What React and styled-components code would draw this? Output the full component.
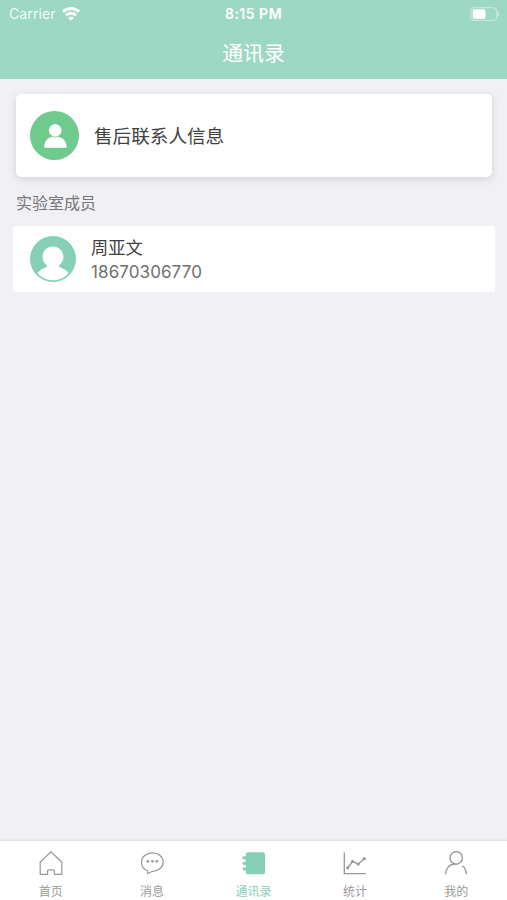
import styled, { createGlobalStyle } from 'styled-components';

const members = [
  { name: '周亚文', phone: '18670306770' },
];

const tabs = [
  { label: '首页', Icon: HomeIcon },
  { label: '消息', Icon: MessageIcon },
  { label: '通讯录', Icon: ContactsIcon, active: true },
  { label: '统计', Icon: ChartIcon },
  { label: '我的', Icon: ProfileIcon },
];

export default function App() {
  return (
    <>
      <GlobalStyle />
      <Screen>
        <Header>
          <StatusBar>
            <Carrier>
              Carrier
              <WifiIcon />
            </Carrier>
            <Clock>8:15 PM</Clock>
            <BatterySlot>
              <BatteryIcon />
            </BatterySlot>
          </StatusBar>
          <Title>通讯录</Title>
        </Header>
        <Content>
          <SupportCard>
            <SupportIcon />
            <SupportText>售后联系人信息</SupportText>
          </SupportCard>
          <SectionLabel>实验室成员</SectionLabel>
          {members.map(member => (
            <MemberRow key={member.phone}>
              <MemberAvatar />
              <MemberInfo>
                <MemberName>{member.name}</MemberName>
                <MemberPhone>{member.phone}</MemberPhone>
              </MemberInfo>
            </MemberRow>
          ))}
        </Content>
        <TabBar>
          {tabs.map(({ label, Icon, active }) => (
            <Tab key={label} $active={active}>
              <Icon />
              <TabLabel>{label}</TabLabel>
            </Tab>
          ))}
        </TabBar>
      </Screen>
    </>
  );
}

function WifiIcon() {
  return (
    <svg width="18" height="14" viewBox="0 0 18 14" fill="none" stroke="#fff" strokeWidth="2.900">
      <path d="M1 4.700a11.600 11.600 0 0 1 16 0" />
      <path d="M3.900 8.300a7.200 7.200 0 0 1 10.200 0" />
      <path d="M9 13.800 6.100 10.900a4 4 0 0 1 5.800 0Z" fill="#fff" stroke="none" />
    </svg>
  );
}

function BatteryIcon() {
  return (
    <svg width="30" height="14" viewBox="0 0 30 14">
      <rect x="0.700" y="0.700" width="26" height="12.600" rx="3.600" fill="none" stroke="#fff" strokeOpacity="0.4" strokeWidth="1.200" />
      <rect x="2.700" y="2.200" width="12.800" height="9.600" rx="1.800" fill="#fff" />
      <path d="M27.500 4.400c2.600.8 2.600 4.400 0 5.200Z" fill="#fff" fillOpacity="0.5" />
    </svg>
  );
}

function SupportIcon() {
  return (
    <svg width="49" height="49" viewBox="0 0 49 49">
      <circle cx="24.500" cy="24.500" r="24.500" fill="#6fca8e" />
      <circle cx="25.200" cy="19.400" r="6.300" fill="#fff" />
      <path d="M14.200 36.700c0-6.400 3.600-10.200 8.100-10.900q2.900 1.300 5.800 0c4.500.7 8.500 4.500 8.500 10.900Z" fill="#fff" />
    </svg>
  );
}

function MemberAvatar() {
  return (
    <svg width="46" height="46" viewBox="0 0 46 46">
      <circle cx="23" cy="23" r="23" fill="#86d0b7" />
      <path d="M23 10.500c6 0 10.400 4.600 10.400 10.500 0 3.500-1.700 6.600-4.400 8.500v1.200c3.500 1.400 7.200 3.400 9.600 6.200C34.500 41.700 29 44.200 23 44.200S11.500 41.700 7.400 36.900c2.400-2.800 6.100-4.800 9.600-6.200v-1.200c-2.700-1.900-4.400-5-4.400-8.500 0-5.900 4.400-10.500 10.400-10.500Z" fill="#fff" />
    </svg>
  );
}

function HomeIcon() {
  return (
    <TabIcon viewBox="0 0 24 24">
      <path d="M.6 11.700 12 .8l11.400 10.900M1.200 11.200v12.200h7.400v-3.700q0-.9.900-.9h5q.9 0 .9.900v3.700h7.400V11.200" />
    </TabIcon>
  );
}

function MessageIcon() {
  return (
    <TabIcon viewBox="0 0 24 24">
      <path d="M7.600 19.700C3.800 18.300 1.500 15 1.500 11.200 1.500 5.900 6.300 1.900 12.400 1.900S23.200 5.900 23.200 11s-4.800 9.300-10.600 9.300l-5.100 2.200Z" />
      <g fill="currentColor" stroke="none">
        <circle cx="7.900" cy="10.300" r="1.400" />
        <circle cx="12.400" cy="10.300" r="1.400" />
        <circle cx="16.900" cy="10.300" r="1.400" />
      </g>
    </TabIcon>
  );
}

function ContactsIcon() {
  return (
    <TabIcon viewBox="0 0 24 24">
      <rect x="3.800" y="1.300" width="19.200" height="22" rx="1.800" fill="currentColor" stroke="none" />
      <path d="M2 6.800H5M2 12.300H5M2 18H5" strokeWidth="3.200" strokeLinecap="round" />
    </TabIcon>
  );
}

function ChartIcon() {
  return (
    <TabIcon viewBox="0 0 24 24">
      <path d="M1.300 1.500v21.200h21.400" strokeWidth="1.300" />
      <path d="m4.700 17 4.900-6.700 5.600 2.900 6.200-5.600" strokeWidth="1.400" />
      <g fill="currentColor" stroke="none">
        <circle cx="4.700" cy="16.800" r="1.600" />
        <circle cx="9.600" cy="10.500" r="1.600" />
        <circle cx="15.200" cy="13.100" r="1.600" />
        <circle cx="21.300" cy="7.700" r="1.600" />
      </g>
    </TabIcon>
  );
}

function ProfileIcon() {
  return (
    <TabIcon viewBox="0 0 24 24">
      <ellipse cx="12.200" cy="6.900" rx="6.200" ry="6.300" strokeWidth="1.400" />
      <path d="M1.700 23.300c0-5.600 3.400-10.100 9.300-10.300M18.300 14.700c2.500 1.900 3.900 4.900 4.100 8.600" strokeWidth="1.400" />
    </TabIcon>
  );
}

const GlobalStyle = createGlobalStyle`
  * {
    box-sizing: border-box;
  }

  body {
    margin: 0;
    font-family: Inter, "Noto Sans CJK SC", sans-serif;
    background: #f0f0f5;
  }

  svg {
    display: block;
    flex-shrink: 0;
  }
`;

const Screen = styled.div`
  height: 100vh;
  display: flex;
  flex-direction: column;
  background: #f0f0f5;
`;

const Header = styled.header`
  height: 79.400px;
  flex-shrink: 0;
  background: #9cd8c3;
  color: #ffffff;
`;

const StatusBar = styled.div`
  height: 27px;
  padding: 0 7px 0 9px;
  display: grid;
  grid-template-columns: 1fr auto 1fr;
  align-items: center;
`;

const Carrier = styled.div`
  display: flex;
  align-items: center;
  gap: 6px;
  font-size: 14px;
  letter-spacing: 0.1px;
  color: rgba(255, 255, 255, 0.9);
`;

const Clock = styled.div`
  margin-right: 2px;
  font-size: 14px;
  font-weight: 600;
  letter-spacing: 0.500px;
`;

const BatterySlot = styled.div`
  display: flex;
  justify-content: flex-end;
`;

const Title = styled.h1`
  margin: 0;
  font-size: 20.800px;
  line-height: 54px;
  font-weight: 400;
  text-align: center;
`;

const Content = styled.main`
  flex: 1;
  padding: 14.600px 12px 0 13px;
`;

const SupportCard = styled.section`
  height: 83px;
  margin: 0 3px;
  padding-left: 14px;
  display: flex;
  align-items: center;
  gap: 15px;
  border-radius: 5px;
  background: #ffffff;
  box-shadow: 0 2px 9px rgba(0, 0, 0, 0.13);
`;

const SupportText = styled.span`
  padding-bottom: 2px;
  font-size: 18.600px;
  color: #404040;
`;

const SectionLabel = styled.h2`
  margin: 0 3px;
  padding-top: 3px;
  font-size: 16px;
  line-height: 46px;
  height: 49px;
  font-weight: 400;
  color: #77777a;
`;

const MemberRow = styled.article`
  height: 66px;
  padding-left: 17px;
  display: flex;
  align-items: center;
  gap: 15px;
  border-radius: 3px;
  background: #ffffff;
`;

const MemberInfo = styled.div`
  padding-top: 2px;
  display: flex;
  flex-direction: column;
`;

const MemberName = styled.span`
  font-size: 17.200px;
  line-height: 25px;
  color: #404040;
`;

const MemberPhone = styled.span`
  font-size: 17px;
  line-height: 25px;
  letter-spacing: 0.100px;
  color: #707070;
`;

const TabBar = styled.nav`
  height: 60px;
  display: flex;
  flex-shrink: 0;
  border-top: 1px solid #e5e5e8;
  background: #ffffff;
  box-shadow: 0 -1px 2px rgba(0, 0, 0, 0.04);
`;

const Tab = styled.div`
  flex: 1;
  padding-top: 10px;
  display: flex;
  flex-direction: column;
  align-items: center;
  color: ${props => props.$active ? "#86d0b7" : "#999999"};
`;

const TabIcon = styled.svg`
  width: 24px;
  height: 24px;
  fill: none;
  stroke: currentColor;
  stroke-width: 1.200;
`;

const TabLabel = styled.span`
  margin-top: 8px;
  font-size: 12px;
  line-height: 18px;
`;
